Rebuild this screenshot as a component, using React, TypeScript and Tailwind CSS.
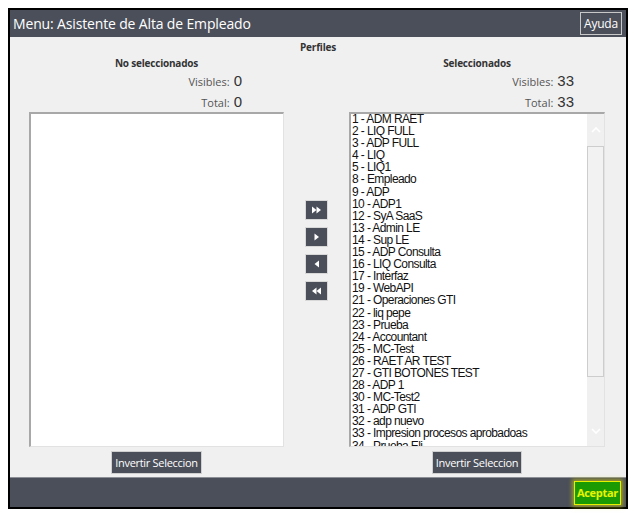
import React from "react";

const seleccionados = [
  "1 - ADM RAET",
  "2 - LIQ FULL",
  "3 - ADP FULL",
  "4 - LIQ",
  "5 - LIQ1",
  "8 - Empleado",
  "9 - ADP",
  "10 - ADP1",
  "12 - SyA SaaS",
  "13 - Admin LE",
  "14 - Sup LE",
  "15 - ADP Consulta",
  "16 - LIQ Consulta",
  "17 - Interfaz",
  "19 - WebAPI",
  "21 - Operaciones GTI",
  "22 - liq pepe",
  "23 - Prueba",
  "24 - Accountant",
  "25 - MC-Test",
  "26 - RAET AR TEST",
  "27 - GTI BOTONES TEST",
  "28 - ADP 1",
  "30 - MC-Test2",
  "31 - ADP GTI",
  "32 - adp nuevo",
  "33 - Impresion procesos aprobadoas",
  "34 - Prueba Eli",
];

const ui = { fontFamily: '"Open Sans", "Noto Sans", sans-serif' };
const arial = { fontFamily: '"Liberation Sans", Arial, sans-serif' };

function Stat({ label, value }: { label: string; value: string }) {
  return (
    <div className="flex items-baseline justify-end gap-[4px] h-[21px]">
      <span className="text-[11px] text-[#555]" style={ui}>{label}</span>
      <span className="text-[15px] text-[#333]" style={arial}>{value}</span>
    </div>
  );
}

function Arrow({ dir, double }: { dir: "l" | "r"; double?: boolean }) {
  const tri = (x: number) =>
    dir === "r" ? `M${x} 1.5 L${x + 4.5} 5 L${x} 8.5 Z` : `M${x + 4.5} 1.5 L${x} 5 L${x + 4.5} 8.5 Z`;
  return (
    <button className="w-[23px] h-[20px] bg-[#4b4f5a] border border-[#d8d8d8] flex items-center justify-center">
      <svg width="11" height="10" viewBox="0 0 11 10">
        {double ? (
          <>
            <path d={tri(1)} fill="white" />
            <path d={tri(5.5)} fill="white" />
          </>
        ) : (
          <path d={tri(3.5)} fill="white" />
        )}
      </svg>
    </button>
  );
}

function InvertButton() {
  return (
    <button
      className="h-[23px] px-[3px] bg-[#4b4f5a] border border-[#d0d0d0] text-white text-[11px] tracking-[-0.3px] leading-none"
      style={ui}
    >
      Invertir Seleccion
    </button>
  );
}

export default function App() {
  return (
    <div className="w-[634px] h-[516px] bg-white pt-[8px] pl-[8px]">
      <div className="w-[620px] h-[501px] border-2 border-black flex flex-col bg-[#f0f0f0]">
        {/* header */}
        <div className="h-[27px] bg-[#4b4f5a] flex items-center justify-between pl-[3px] pr-[4px]">
          <span className="text-white text-[14px] tracking-[-0.15px]" style={ui}>
            Menu: Asistente de Alta de Empleado
          </span>
          <button
            className="h-[23px] px-[3px] border border-[#c8c8c8] text-white text-[12px] tracking-[-0.2px] leading-none"
            style={ui}
          >
            Ayuda
          </button>
        </div>

        {/* body */}
        <div className="flex-1 flex flex-col pl-[19px] pr-[21px]">
          <div className="text-center text-[10px] font-bold tracking-[-0.2px] text-[#333] h-[20px] leading-[20px] pl-[2px]" style={ui}>
            Perfiles
          </div>
          <div className="flex flex-1">
            {/* left */}
            <div className="w-[255px] flex flex-col">
              <div className="text-center text-[10px] font-bold tracking-[-0.2px] text-[#333] h-[13px] leading-[13px]" style={ui}>
                No seleccionados
              </div>
              <div className="pr-[42px]">
                <Stat label="Visibles:" value="0" />
                <Stat label="Total:" value="0" />
              </div>
              <div className="h-[335px] bg-white border border-[#e2e2e2] border-t-2 border-t-[#a8a8a8] border-l-2 border-l-[#a8a8a8]" />
              <div className="flex justify-center mt-[4px]">
                <InvertButton />
              </div>
            </div>

            {/* middle */}
            <div className="w-[65px] flex flex-col items-center pt-[143px] gap-[7px]">
              <Arrow dir="r" double />
              <Arrow dir="r" />
              <Arrow dir="l" />
              <Arrow dir="l" double />
            </div>

            {/* right */}
            <div className="w-[256px] flex flex-col">
              <div className="text-center text-[10px] font-bold tracking-[-0.2px] text-[#333] h-[13px] leading-[13px]" style={ui}>
                Seleccionados
              </div>
              <div className="pr-[31px]">
                <Stat label="Visibles:" value="33" />
                <Stat label="Total:" value="33" />
              </div>
              <div className="h-[335px] bg-white border border-[#e2e2e2] border-t-2 border-t-[#a8a8a8] border-l-2 border-l-[#a8a8a8] flex overflow-hidden">
                <div className="flex-1 overflow-hidden pl-[1px] -mt-[1px] text-[12px] leading-[12.1px] tracking-[-0.6px] text-[#111]" style={arial}>
                  {seleccionados.map((s) => (
                    <div key={s} className="whitespace-nowrap">{s}</div>
                  ))}
                </div>
                <div className="w-[17px] bg-[#f0f0f0] flex flex-col">
                  <div className="h-[32px] flex items-center justify-center">
                    <svg width="10" height="6" viewBox="0 0 10 6">
                      <path d="M1 5 L5 1 L9 5" stroke="white" strokeWidth="1.6" fill="none" />
                    </svg>
                  </div>
                  <div className="h-[231px] bg-[#f2f2f2] border border-[#cdcdcd]" />
                  <div className="flex-1 flex items-end justify-center pb-[12px]">
                    <svg width="10" height="6" viewBox="0 0 10 6">
                      <path d="M1 1 L5 5 L9 1" stroke="white" strokeWidth="1.6" fill="none" />
                    </svg>
                  </div>
                </div>
              </div>
              <div className="flex justify-center mt-[4px]">
                <InvertButton />
              </div>
            </div>
          </div>
        </div>

        {/* footer */}
        <div className="h-[30px] bg-[#4b4f5a] border-t border-t-[#8c8f96] flex items-center justify-end pr-[5px]">
          <button
            className="h-[24px] px-[2px] bg-[#1b9a04] border border-[#e6f000] text-[#e8f500] text-[11px] font-bold tracking-[-0.3px] leading-none shadow-[0_0_4px_2px_rgba(220,220,0,0.55)]"
            style={ui}
          >
            Aceptar
          </button>
        </div>
      </div>
    </div>
  );
}
